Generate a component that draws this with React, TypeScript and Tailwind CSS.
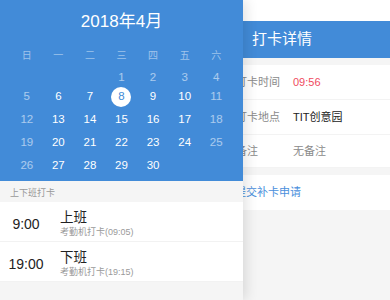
import React from 'react';

const font = { fontFamily: '"Liberation Sans", "Noto Sans CJK SC", sans-serif' };

type Day = { n?: number; dim?: boolean; sel?: boolean };

const weeks: Day[][] = [
  [{}, {}, {}, { n: 1, dim: true }, { n: 2, dim: true }, { n: 3, dim: true }, { n: 4, dim: true }],
  [{ n: 5, dim: true }, { n: 6 }, { n: 7 }, { n: 8, sel: true }, { n: 9 }, { n: 10 }, { n: 11, dim: true }],
  [{ n: 12, dim: true }, { n: 13 }, { n: 14 }, { n: 15 }, { n: 16 }, { n: 17 }, { n: 18, dim: true }],
  [{ n: 19, dim: true }, { n: 20 }, { n: 21 }, { n: 22 }, { n: 23 }, { n: 24 }, { n: 25, dim: true }],
  [{ n: 26, dim: true }, { n: 27 }, { n: 28 }, { n: 29 }, { n: 30 }, {}, {}],
];

const rowGaps = ['mt-[3px]', 'mt-[-1px]', 'mt-[3px]', 'mt-[3px]', 'mt-[3px]'];

const weekdays = ['日', '一', '二', '三', '四', '五', '六'];

function DetailRow({ label, value, valueClass, h }: { label: string; value: string; valueClass: string; h: string }) {
  return (
    <div className={`flex items-center bg-white border-b border-[#f3f3f3] pl-[236px] ${h}`}>
      <span className="w-[57px] text-[11px] text-[#8a8a8a]">{label}</span>
      <span className={`text-[11px] ${valueClass}`}>{value}</span>
    </div>
  );
}

function Punch({ time, title, sub }: { time: string; title: string; sub: string }) {
  return (
    <div className="flex items-center h-[40px] pt-[5px] bg-white border-b border-[#f2f2f2]">
      <div className="w-[52px] text-center text-[14px] text-[#222]">{time}</div>
      <div className="ml-[8px] flex flex-col">
        <span className="text-[13.5px] leading-[17px] text-[#222]">{title}</span>
        <span className="text-[9px] leading-[13px] text-[#9a9a9a]">{sub}</span>
      </div>
    </div>
  );
}

export default function App() {
  return (
    <div className="relative w-[390px] h-[300px] overflow-hidden bg-[#f5f5f5]" style={font}>
      {/* page behind the drawer */}
      <div className="flex flex-col">
        <div className="h-[21px] bg-white" />
        <div className="h-[37px] bg-[#428bd8] flex items-center pl-[252px] text-white text-[15px]">打卡详情</div>
        <div className="h-[7px]" />
        <DetailRow label="打卡时间" value="09:56" valueClass="text-[#f04a5e]" h="h-[35px]" />
        <DetailRow label="打卡地点" value="TIT创意园" valueClass="text-[#222]" h="h-[35px]" />
        <DetailRow label="备注" value="无备注" valueClass="text-[#8a8a8a]" h="h-[33px]" />
        <div className="h-[7px]" />
        <div className="h-[35px] bg-white flex items-center pl-[235px] text-[11px] text-[#4a8fdc]">提交补卡申请</div>
      </div>

      {/* drawer */}
      <div className="absolute left-0 top-0 w-[243px] h-[300px] bg-[#f5f5f5] shadow-[3px_0_12px_rgba(0,0,0,0.12)] flex flex-col">
        <div className="h-[181px] bg-[#428bd8] flex flex-col">
          <div className="mt-[10px] text-center text-white text-[17px] leading-[24px]">2018年4月</div>
          <div className="mt-[11px] grid grid-cols-7 px-[11px] h-[20px] items-center">
            {weekdays.map((w) => (
              <span key={w} className="text-center text-[10px] text-white/50">{w}</span>
            ))}
          </div>
          {weeks.map((week, i) => (
            <div key={i} className={`grid grid-cols-7 px-[11px] h-[20px] items-center ${rowGaps[i]}`}>
              {week.map((d, j) => (
                <div key={j} className="flex justify-center">
                  {d.sel ? (
                    <span className="w-[20px] h-[20px] rounded-full bg-white text-[#428bd8] text-[11.5px] flex items-center justify-center">{d.n}</span>
                  ) : (
                    <span className={`text-[11.5px] ${d.dim ? 'text-white/55' : 'text-white'}`}>{d.n ?? ''}</span>
                  )}
                </div>
              ))}
            </div>
          ))}
        </div>
        <div className="h-[21px] flex items-center pt-[4px] pl-[10px] text-[9px] text-[#999]">上下班打卡</div>
        <Punch time="9:00" title="上班" sub="考勤机打卡(09:05)" />
        <Punch time="19:00" title="下班" sub="考勤机打卡(19:15)" />
      </div>
    </div>
  );
}
